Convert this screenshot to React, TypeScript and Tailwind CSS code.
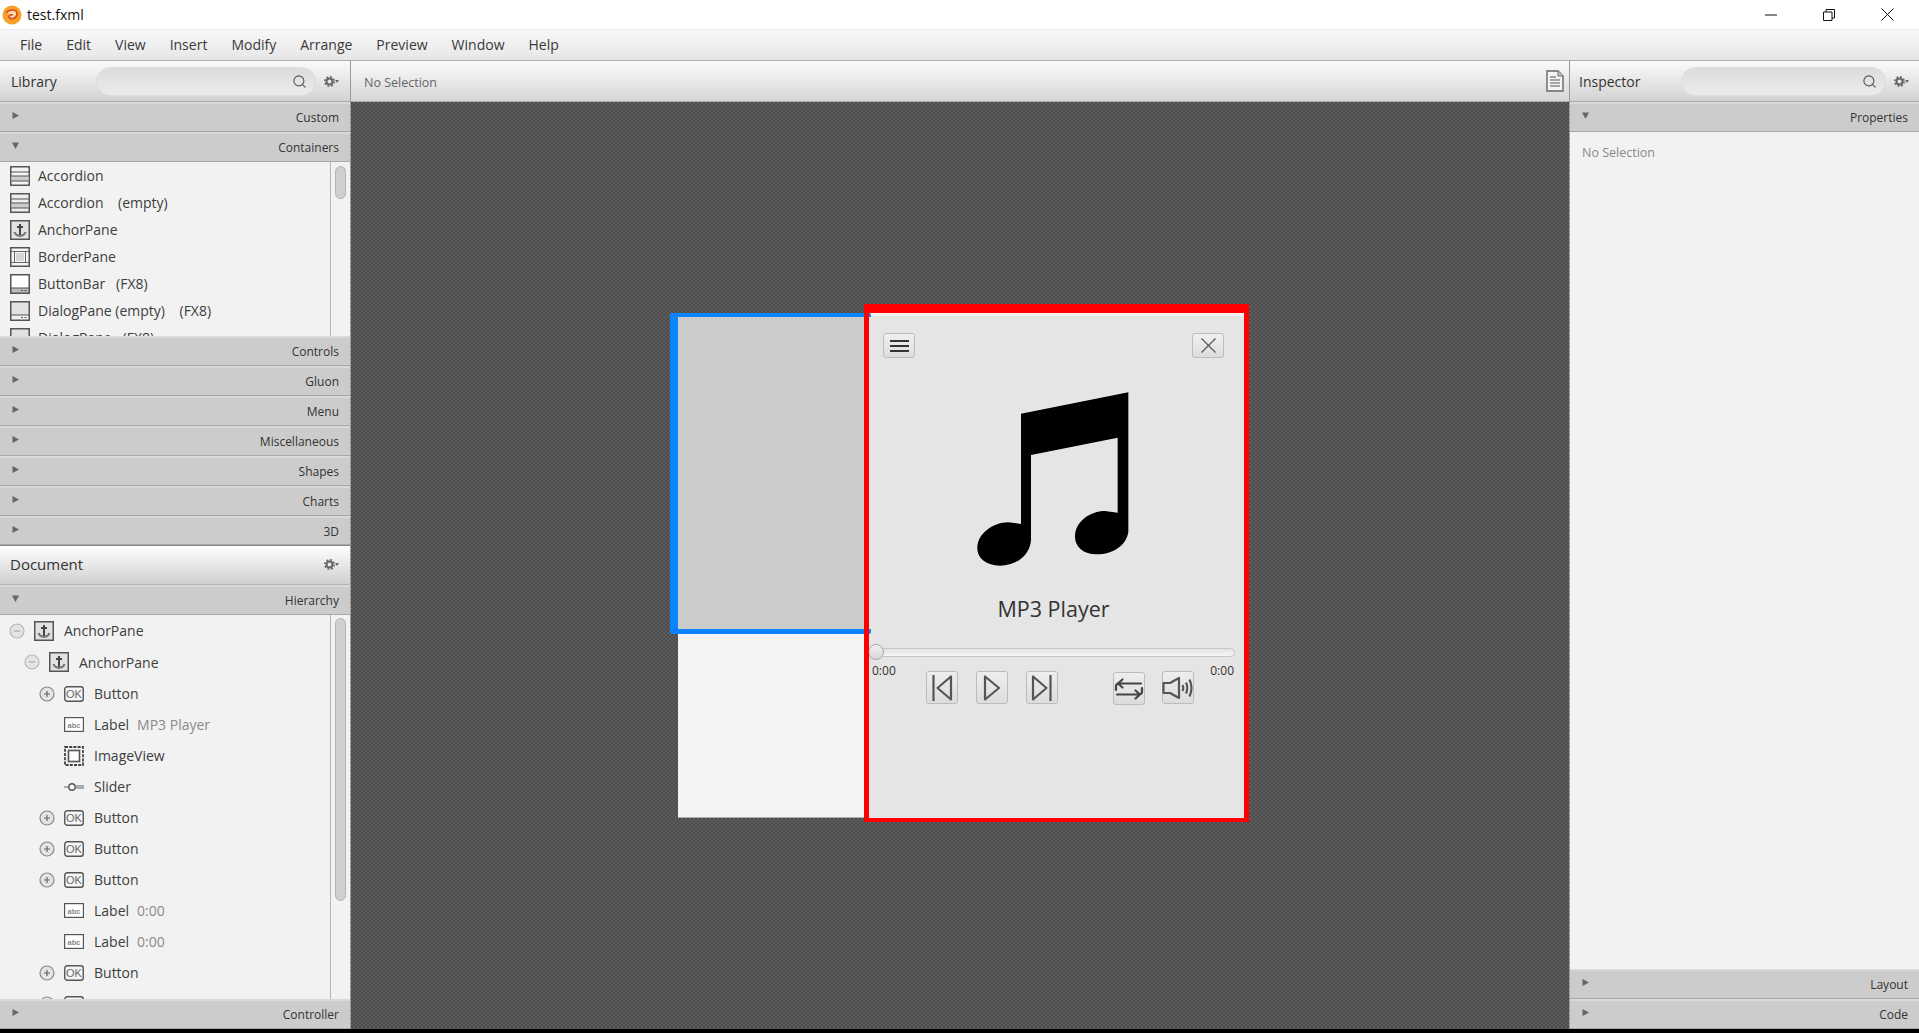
import React from 'react'
import { Search } from 'lucide-react'

const font = "font-['Open_Sans','Noto_Sans',sans-serif]"

function Arrow({ open }: { open?: boolean }) {
  return (
    <svg width="9" height="9" viewBox="0 0 9 9" className="shrink-0">
      {open ? <path d="M1 1.5 H8 L4.5 8 Z" fill="#666" /> : <path d="M1.5 1 L8 4.5 L1.5 8 Z" fill="#666" />}
    </svg>
  )
}

function SectionBar({ label, open, h = 'h-[30px]' }: { label: string; open?: boolean; h?: string }) {
  return (
    <div className={`${h} shrink-0 flex justify-between pl-[11px] pr-[11px] bg-[#cccccc] border-t-2 border-t-[#d9d9d9] border-b border-b-[#a8a8a8] text-[12px] text-[#333]`}>
      <div className="pt-[7px]"><Arrow open={open} /></div>
      <span className="pt-[5px]">{label}</span>
    </div>
  )
}

function Gear() {
  return (
    <svg width="15" height="11" viewBox="0 0 15 11" fill="none" className="shrink-0">
      <circle cx="5.5" cy="5.5" r="3" stroke="#666" strokeWidth="2" />
      <circle cx="5.5" cy="5.5" r="4.7" stroke="#666" strokeWidth="1.6" strokeDasharray="1.9 1.79" />
      <path d="M11 4 H15 L13 7 Z" fill="#666" />
    </svg>
  )
}

function SearchBox({ w }: { w: string }) {
  return (
    <div className={`${w} h-[29px] rounded-full border border-[#dedede] bg-gradient-to-b from-[#dcdcdc] to-[#ececec] flex items-center justify-end pr-[8px]`}>
      <Search size={15} strokeWidth={1.8} className="text-[#555]" />
    </div>
  )
}

function PanelHeader({ children }: { children?: React.ReactNode }) {
  return (
    <div className="h-[41px] shrink-0 flex items-center bg-gradient-to-b from-[#fbfbfb] to-[#d2d2d2] border-b border-[#ababab]">
      {children}
    </div>
  )
}

function AccordionIcon({ dark }: { dark?: boolean }) {
  return (
    <svg width="20" height="20" viewBox="0 0 20 20" className="shrink-0">
      <rect x="0.75" y="0.75" width="18.5" height="18.5" fill={dark ? '#eee' : '#f4f4f4'} stroke="#555" strokeWidth="1.5" />
      <rect x="1.5" y="10" width="17" height="5" fill="#ccc" />
      <path d="M1 6 H19 M1 10 H19 M1 15 H19" stroke="#555" strokeWidth="1.2" />
    </svg>
  )
}

function AnchorIcon() {
  return (
    <svg width="20" height="20" viewBox="0 0 20 20" className="shrink-0">
      <rect x="0.75" y="0.75" width="18.5" height="18.5" fill="#e2e2e2" stroke="#555" strokeWidth="1.5" />
      <path d="M10 4 V15 M7 7 H13" stroke="#444" strokeWidth="2" />
      <path d="M4.5 12 C5.5 15.5 8 15.5 10 16 C12 15.5 14.5 15.5 15.5 12" fill="none" stroke="#777" strokeWidth="2" />
    </svg>
  )
}

function BorderIcon() {
  return (
    <svg width="20" height="20" viewBox="0 0 20 20" className="shrink-0">
      <rect x="0.75" y="0.75" width="18.5" height="18.5" fill="#f6f6f6" stroke="#555" strokeWidth="1.5" />
      <rect x="6" y="6" width="8" height="8" fill="#d6d6d6" />
      <path d="M1 4.5 H19 M1 15.5 H19 M4.5 4.5 V15.5 M15.5 4.5 V15.5" stroke="#666" strokeWidth="1" />
    </svg>
  )
}

function ButtonBarIcon({ filled }: { filled?: boolean }) {
  return (
    <svg width="20" height="20" viewBox="0 0 20 20" className="shrink-0">
      <rect x="0.75" y="0.75" width="18.5" height="18.5" fill={filled ? '#e2e2e2' : '#fff'} stroke="#555" strokeWidth="1.5" />
      <rect x="1" y="14" width="18" height="5" fill={filled ? '#f0f0f0' : '#bbb'} stroke="#555" strokeWidth="1" />
      <path d="M11 16.5 H13 M14.5 16.5 H16.5" stroke="#555" strokeWidth="1" />
    </svg>
  )
}

function OkIcon() {
  return (
    <svg width="20" height="16" viewBox="0 0 20 16" className="shrink-0">
      <rect x="0.75" y="0.75" width="18.5" height="14.5" rx="2.5" fill="#f6f6f6" stroke="#555" strokeWidth="1.4" />
      <text x="10" y="12" textAnchor="middle" fontSize="11" fontFamily="Liberation Sans" fill="#666">OK</text>
    </svg>
  )
}

function AbcIcon() {
  return (
    <svg width="20" height="15" viewBox="0 0 20 15" className="shrink-0">
      <rect x="0.6" y="0.6" width="18.8" height="13.8" fill="#fff" stroke="#555" strokeWidth="1.2" />
      <text x="10" y="10.5" textAnchor="middle" fontSize="7.5" fontWeight="bold" fontFamily="Liberation Sans" fill="#888">abc</text>
    </svg>
  )
}

function ImageIcon() {
  return (
    <svg width="20" height="20" viewBox="0 0 20 20" className="shrink-0">
      <rect x="1" y="1" width="18" height="18" fill="none" stroke="#444" strokeWidth="1.8" strokeDasharray="3 1.2" />
      <rect x="4.5" y="4.5" width="11" height="11" fill="#fff" stroke="#555" strokeWidth="1.6" />
    </svg>
  )
}

function SliderIcon() {
  return (
    <svg width="20" height="10" viewBox="0 0 20 10" className="shrink-0">
      <path d="M0 5 H6 M12 4 H20 M12 6 H20" stroke="#666" strokeWidth="1.2" />
      <circle cx="8" cy="5" r="3.2" fill="#f4f4f4" stroke="#555" strokeWidth="1.4" />
    </svg>
  )
}

function Toggle({ plus }: { plus?: boolean }) {
  return (
    <svg width="16" height="16" viewBox="0 0 16 16" className="shrink-0">
      <circle cx="8" cy="8" r="7" fill="#e4e4e4" stroke={plus ? '#888' : '#b5b5b5'} strokeWidth="1.2" />
      <path d={plus ? 'M5 8 H11 M8 5 V11' : 'M5 8 H11'} stroke={plus ? '#666' : '#aaa'} strokeWidth="1.2" />
    </svg>
  )
}

const libraryItems: { label: string; icon: React.ReactNode }[] = [
  { label: 'Accordion', icon: <AccordionIcon /> },
  { label: 'Accordion    (empty)', icon: <AccordionIcon dark /> },
  { label: 'AnchorPane', icon: <AnchorIcon /> },
  { label: 'BorderPane', icon: <BorderIcon /> },
  { label: 'ButtonBar   (FX8)', icon: <ButtonBarIcon /> },
  { label: 'DialogPane (empty)    (FX8)', icon: <ButtonBarIcon filled /> },
  { label: 'DialogPane   (FX8)', icon: <ButtonBarIcon filled /> },
]

type TreeRow = { label: string; extra?: string; icon: React.ReactNode; toggle?: boolean }

const treeRows: TreeRow[] = [
  { label: 'Button', icon: <OkIcon />, toggle: true },
  { label: 'Label', extra: 'MP3 Player', icon: <AbcIcon /> },
  { label: 'ImageView', icon: <ImageIcon /> },
  { label: 'Slider', icon: <SliderIcon /> },
  { label: 'Button', icon: <OkIcon />, toggle: true },
  { label: 'Button', icon: <OkIcon />, toggle: true },
  { label: 'Button', icon: <OkIcon />, toggle: true },
  { label: 'Label', extra: '0:00', icon: <AbcIcon /> },
  { label: 'Label', extra: '0:00', icon: <AbcIcon /> },
  { label: 'Button', icon: <OkIcon />, toggle: true },
  { label: 'Button', icon: <OkIcon />, toggle: true },
]

function LeftPanel() {
  return (
    <aside className="w-[351px] shrink-0 flex flex-col bg-[#f2f2f2] border-r border-[#9a9a9a]">
      <PanelHeader>
        <span className="w-[96px] pl-[11px] text-[14px] text-[#333]">Library</span>
        <SearchBox w="w-[220px]" />
        <div className="ml-[8px]"><Gear /></div>
      </PanelHeader>
      <SectionBar label="Custom" />
      <SectionBar label="Containers" open />
      <div className="h-[174px] shrink-0 flex overflow-hidden">
        <div className="flex-1 flex flex-col overflow-hidden">
          {libraryItems.map((it, i) => (
            <div key={i} className="h-[27px] shrink-0 flex items-center gap-[8px] pl-[10px] text-[14px] text-[#3d3d3d] whitespace-pre">
              {it.icon}
              <span>{it.label}</span>
            </div>
          ))}
        </div>
        <div className="w-[20px] shrink-0 border-l border-[#b5b5b5] pt-[4px] pl-[4px]">
          <div className="w-[11px] h-[33px] rounded-full bg-[#cfcfcf] border border-[#b4b4b4]" />
        </div>
      </div>
      <SectionBar label="Controls" />
      <SectionBar label="Gluon" />
      <SectionBar label="Menu" />
      <SectionBar label="Miscellaneous" />
      <SectionBar label="Shapes" />
      <SectionBar label="Charts" />
      <SectionBar label="3D" h="h-[29px]" />
      <div className="h-[40px] shrink-0 flex items-center justify-between pl-[10px] pr-[11px] pb-[2px] bg-gradient-to-b from-[#ffffff] to-[#d0d0d0] border-t border-[#888] border-b border-b-[#b5b5b5] text-[15px] text-[#333]">
        <span>Document</span>
        <Gear />
      </div>
      <SectionBar label="Hierarchy" open />
      <div className="h-[384px] shrink-0 flex overflow-hidden">
        <div className="flex-1 flex flex-col overflow-hidden text-[14px] text-[#3d3d3d]">
          <div className="h-[31px] shrink-0 flex items-center pl-[9px]">
            <Toggle />
            <div className="ml-[9px]"><AnchorIcon /></div>
            <span className="ml-[10px]">AnchorPane</span>
          </div>
          <div className="h-[32px] shrink-0 flex items-center pl-[24px]">
            <Toggle />
            <div className="ml-[9px]"><AnchorIcon /></div>
            <span className="ml-[10px]">AnchorPane</span>
          </div>
          {treeRows.map((r, i) => (
            <div key={i} className="h-[31px] shrink-0 flex items-center pl-[39px]">
              <div className="w-[25px] shrink-0">{r.toggle && <Toggle plus />}</div>
              <div className="w-[30px] shrink-0">{r.icon}</div>
              <span>{r.label}</span>
              {r.extra && <span className="ml-[8px] text-[#8a8a8a]">{r.extra}</span>}
            </div>
          ))}
        </div>
        <div className="w-[20px] shrink-0 border-l border-[#b5b5b5] pt-[3px] pl-[4px]">
          <div className="w-[11px] h-[283px] rounded-full bg-[#cfcfcf] border border-[#b4b4b4]" />
        </div>
      </div>
      <SectionBar label="Controller" />
    </aside>
  )
}

function RightPanel() {
  return (
    <aside className="flex-1 min-w-0 flex flex-col bg-[#f2f2f2]">
      <PanelHeader>
        <span className="w-[111px] pl-[9px] text-[14px] text-[#333]">Inspector</span>
        <SearchBox w="w-[205px]" />
        <div className="ml-[8px]"><Gear /></div>
      </PanelHeader>
      <SectionBar label="Properties" open />
      <div className="flex-1 pt-[12px] pl-[12px] text-[12.5px] text-[#8a8a8a]">No Selection</div>
      <SectionBar label="Layout" />
      <SectionBar label="Code" />
    </aside>
  )
}

function PlayerButton({ children }: { children: React.ReactNode }) {
  return (
    <div className="w-[32px] h-[33px] shrink-0 rounded-[3px] border border-[#bcbcbc] bg-gradient-to-b from-[#eeeeee] to-[#dcdcdc] flex items-center justify-center">
      {children}
    </div>
  )
}

function MusicNote() {
  return (
    <svg width="180" height="200" viewBox="0 0 540 600" className="block">
      <path
        fill="#000"
        d="M183 101 L505 37 L505 455 C500 495 460 523 410 523 C370 523 345 500 345 470 C345 425 390 393 435 393 L473 398 L473 173 L213 225 L213 480 C210 525 170 557 120 557 C80 557 52 535 52 505 C52 460 100 427 145 427 L183 432 Z"
      />
    </svg>
  )
}

function Player() {
  return (
    <div className="w-[379px] h-[505px] shrink-0 bg-[#e5e5e5] border-t-[3px] border-t-[#f1f1f1] flex flex-col text-[#333]">
      <div className="flex justify-between pl-[18px] pr-[20px] pt-[17px]">
        <div className="w-[32px] h-[25px] rounded-[3px] border border-[#bcbcbc] bg-gradient-to-b from-[#f0f0f0] to-[#dddddd] flex flex-col items-center justify-center gap-[3px]">
          <div className="w-[19px] h-[2px] bg-[#333]" />
          <div className="w-[19px] h-[2px] bg-[#333]" />
          <div className="w-[19px] h-[2px] bg-[#333]" />
        </div>
        <div className="w-[32px] h-[25px] rounded-[3px] border border-[#bcbcbc] bg-gradient-to-b from-[#f0f0f0] to-[#dddddd] flex items-center justify-center">
          <svg width="17" height="17" viewBox="0 0 17 17"><path d="M1.5 1.5 L15.5 15.5 M15.5 1.5 L1.5 15.5" stroke="#555" strokeWidth="1.2" /></svg>
        </div>
      </div>
      <div className="pl-[95px] pt-[22px]">
        <MusicNote />
      </div>
      <div className="mt-[14px] h-[30px] flex items-center justify-center pr-[2px] text-[21.5px] leading-none text-[#333]">MP3 Player</div>
      <div className="relative mt-[24px] ml-[4px] mr-[9px] h-[9px] rounded-full border border-[#c6c6c6] bg-gradient-to-b from-[#e2e2e2] to-[#f6f6f6]">
        <div className="absolute left-[-2px] top-[-5px] w-[16px] h-[16px] rounded-full border border-[#a8a8a8] bg-gradient-to-b from-[#f0f0f0] to-[#d8d8d8]" />
      </div>
      <div className="flex mt-[4px] pl-[7px] pr-[10px]">
        <span className="w-[54px] shrink-0 text-[12px] leading-[20px] text-[#333]">0:00</span>
        <div className="flex items-start mt-[10px]">
          <div className="flex gap-[18px]">
            <PlayerButton>
              <svg width="22" height="28" viewBox="0 0 22 28" fill="none" stroke="#555" strokeWidth="2.2" strokeLinejoin="round" className="shrink-0"><path d="M2.5 1 V27 M20 2.5 V25.5 L6.5 14 Z" /></svg>
            </PlayerButton>
            <PlayerButton>
              <svg width="18" height="28" viewBox="0 0 18 28" fill="none" stroke="#555" strokeWidth="2.2" strokeLinejoin="round" className="shrink-0"><path d="M2 2.5 V25.5 L16 14 Z" /></svg>
            </PlayerButton>
            <PlayerButton>
              <svg width="22" height="28" viewBox="0 0 22 28" fill="none" stroke="#555" strokeWidth="2.2" strokeLinejoin="round" className="shrink-0"><path d="M19.5 1 V27 M2 2.5 V25.5 L15.5 14 Z" /></svg>
            </PlayerButton>
          </div>
          <div className="ml-[55px] mt-[1px]">
            <PlayerButton>
              <svg width="30" height="24" viewBox="0 0 30 24" fill="none" stroke="#444" strokeWidth="2.2" strokeLinejoin="round" strokeLinecap="round" className="shrink-0"><path d="M2 13 V9.5 Q2 6.5 5 6.5 H27 M8.5 2.5 L4 6.5 L8.5 10.5 M28 11 V14.5 Q28 17.5 25 17.5 H3 M21.5 13.5 L26 17.5 L21.5 21.5" /></svg>
            </PlayerButton>
          </div>
          <div className="ml-[17px]">
            <PlayerButton>
              <svg width="32" height="26" viewBox="0 0 32 26" fill="none" stroke="#555" strokeWidth="2.2" strokeLinejoin="round" className="shrink-0"><path d="M1.5 8 H8 L17 3 V23 L8 18 H1.5 Z" /><path d="M20.5 10 Q22 13 20.5 16 M24 7.5 Q26.5 13 24 18.5 M27.5 4.5 Q31.5 13 27.5 21.5" /></svg>
            </PlayerButton>
          </div>
        </div>
        <span className="ml-auto text-[12px] leading-[20px] text-[#333]">0:00</span>
      </div>
    </div>
  )
}

function Canvas() {
  return (
    <main className="w-[1219px] shrink-0 flex flex-col">
      <div className="h-[41px] shrink-0 flex items-center justify-between pl-[13px] pr-[4px] bg-gradient-to-b from-[#fbfbfb] to-[#d6d6d6] border-b border-[#ababab] border-r border-r-[#9a9a9a] text-[12.5px] text-[#666]">
        <span className="pt-[4px]">No Selection</span>
        <svg width="20" height="22" viewBox="0 0 20 22">
          <path d="M2 1 H13 L18 6 V21 H2 Z" fill="#f4f4f4" stroke="#666" strokeWidth="1.4" />
          <path d="M13 1 V6 H18" fill="#ccc" stroke="#666" strokeWidth="1" />
          <path d="M5 7 H11 M5 10 H15 M5 13 H15 M5 16 H15" stroke="#888" strokeWidth="1.4" />
        </svg>
      </div>
      <div className="flex-1 bg-[repeating-conic-gradient(#5e5e5e_0_25%,#4b4b4b_0_50%)] bg-[length:4px_4px] border-r border-[#9a9a9a] pt-[211px] pl-[327px]">
        <div className="relative w-[566px] h-[505px] flex bg-[#f4f4f4] border-b border-b-[#aaa]">
          <div className="w-[187px] shrink-0 flex flex-col">
            <div className="h-[316px] mt-[4px] bg-[#cccccc] border-b-2 border-b-[#e4e4e4]" />
          </div>
          <Player />
          {/* selection outlines */}
          <div className="absolute left-[-8px] top-0 w-[201px] h-[321px] border-l-[8px] border-t-[4px] border-b-[5px] border-[#0a84ff] rounded-[2px]" />
          <div className="absolute left-[186px] top-[-9px] w-[385px] h-[518px] border-l-[5px] border-r-[5px] border-t-[9px] border-b-[4px] border-[#ff0000]" />
        </div>
      </div>
    </main>
  )
}

export default function App() {
  return (
    <div className={`w-[1919px] h-[1033px] flex flex-col overflow-hidden bg-white ${font}`}>
      {/* title bar */}
      <div className="h-[29px] shrink-0 flex items-center justify-between bg-white">
        <div className="flex items-center pl-[2px] gap-[5px] text-[14px] text-[#111]">
          <svg width="20" height="20" viewBox="0 0 20 20">
            <circle cx="10" cy="10" r="9.5" fill="#f7a128" />
            <path d="M4 8 C7 4 14 4 15 8 C16 12 11 15 8 13 C5.5 12 8 9 11 10" fill="#fbd9a8" stroke="#dd4a1e" strokeWidth="1.6" />
          </svg>
          <span>test.fxml</span>
        </div>
        <div className="flex items-center gap-[46px] pr-[25px]">
          <svg width="12" height="12" viewBox="0 0 12 12"><path d="M0 6 H12" stroke="#111" strokeWidth="1" /></svg>
          <svg width="12" height="12" viewBox="0 0 12 12" fill="none" stroke="#111"><path d="M0.5 3 H9 V11.5 H0.5 Z M3 3 V0.5 H11.5 V9 H9" /></svg>
          <svg width="13" height="13" viewBox="0 0 13 13"><path d="M0.5 0.5 L12.5 12.5 M12.5 0.5 L0.5 12.5" stroke="#111" strokeWidth="1" /></svg>
        </div>
      </div>
      {/* menu */}
      <div className="h-[32px] shrink-0 flex items-center gap-[24px] pl-[20px] pb-[2px] bg-gradient-to-b from-[#f8f8f8] to-[#e6e6e6] border-t border-[#eeeeee] border-b border-b-[#ababab] text-[14px] text-[#3a3a3a]">
        {['File', 'Edit', 'View', 'Insert', 'Modify', 'Arrange', 'Preview', 'Window', 'Help'].map((m) => (
          <span key={m}>{m}</span>
        ))}
      </div>
      <div className="h-[968px] shrink-0 flex">
        <LeftPanel />
        <Canvas />
        <RightPanel />
      </div>
      <div className="flex-1 bg-black" />
    </div>
  )
}
